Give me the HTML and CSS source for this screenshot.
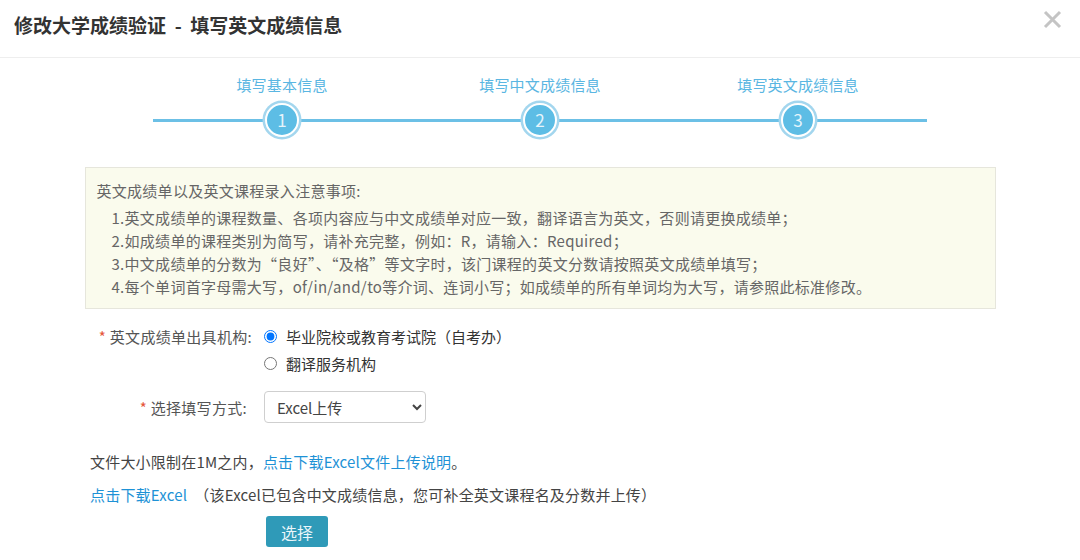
FILE: index.html
```html
<!DOCTYPE html>
<html lang="zh-CN">
<head>
    <meta charset="UTF-8">
    <title>修改大学成绩验证</title>
    <link rel="stylesheet" href="styles.css">
</head>
<body>
    <div class="dialog">
        <div class="dialog-header">
            <h2 class="dialog-title">修改大学成绩验证&nbsp;&nbsp;-&nbsp;&nbsp;填写英文成绩信息</h2>
            <span class="close">
                <svg width="19" height="19" viewBox="0 0 19 19"><path d="M2 2L17 17M17 2L2 17" stroke="#c4c4c4" stroke-width="3"/></svg>
            </span>
        </div>

        <div class="steps">
            <div class="step">
                <div class="step-name">填写基本信息</div>
                <div class="step-num">1</div>
            </div>
            <div class="step">
                <div class="step-name">填写中文成绩信息</div>
                <div class="step-num">2</div>
            </div>
            <div class="step">
                <div class="step-name">填写英文成绩信息</div>
                <div class="step-num">3</div>
            </div>
        </div>

        <div class="notice">
            <p class="notice-title">英文成绩单以及英文课程录入注意事项:</p>
            <p class="notice-item">1.英文成绩单的课程数量、各项内容应与中文成绩单对应一致，翻译语言为英文，否则请更换成绩单；</p>
            <p class="notice-item">2.如成绩单的课程类别为简写，请补充完整，例如：R，请输入：Required；</p>
            <p class="notice-item">3.中文成绩单的分数为“良好”、“及格”等文字时，该门课程的英文分数请按照英文成绩单填写；</p>
            <p class="notice-item">4.每个单词首字母需大写，of/in/and/to等介词、连词小写；如成绩单的所有单词均为大写，请参照此标准修改。</p>
        </div>

        <form class="form">
            <div class="form-row">
                <label class="form-label"><span class="req">*</span> 英文成绩单出具机构:</label>
                <div class="radio-group">
                    <label class="radio"><input type="radio" name="org" checked> 毕业院校或教育考试院（自考办）</label>
                    <label class="radio"><input type="radio" name="org"> 翻译服务机构</label>
                </div>
            </div>
            <div class="form-row row-select">
                <label class="form-label label-short"><span class="req">*</span> 选择填写方式:</label>
                <select class="select">
                    <option>Excel上传</option>
                    <option>手动填写</option>
                </select>
            </div>
        </form>

        <p class="tip">文件大小限制在1M之内，<a href="#">点击下载Excel文件上传说明</a>。</p>
        <p class="download"><a href="#">点击下载Excel</a> &nbsp;（该Excel已包含中文成绩信息，您可补全英文课程名及分数并上传）</p>
        <div class="actions">
            <button type="button" class="btn">选择</button>
        </div>
    </div>
</body>
</html>
```

FILE: styles.css
```css
body {
    margin: 0;
    background: #fff;
    font-family: "Noto Sans CJK SC", "Noto Sans", sans-serif;
    color: #333;
}
p {
    margin: 0;
}
a {
    color: #1e92d6;
    text-decoration: none;
}

.dialog-header {
    height: 57px;
    border-bottom: 1px solid #eeeeee;
    display: flex;
    justify-content: space-between;
    padding: 0 18px 0 14px;
}
.dialog-title {
    margin: 0;
    padding-top: 13px;
    font-size: 19px;
    line-height: 24px;
    font-weight: bold;
    color: #333;
}
.close {
    margin-top: 10px;
    height: 19px;
    cursor: pointer;
}

.steps {
    position: relative;
    width: 774px;
    margin: 17px auto 0;
    display: grid;
    grid-template-columns: repeat(3, 1fr);
}
.steps::before {
    content: "";
    position: absolute;
    left: 0;
    right: 0;
    top: 44px;
    height: 3px;
    background: #6cc0e6;
}
.step {
    position: relative;
    display: flex;
    flex-direction: column;
    align-items: center;
}
.step-name {
    font-size: 15px;
    line-height: 20px;
    color: #5ab6e2;
    letter-spacing: 0.2px;
}
.step-num {
    margin-top: 8px;
    width: 30px;
    height: 30px;
    border-radius: 50%;
    border: 2px solid #fff;
    box-shadow: 0 0 0 2.5px #a3d6ee;
    background: #5dbde5;
    color: #e6f4fb;
    font-size: 17px;
    line-height: 30px;
    text-align: center;
}

.notice {
    width: 887px;
    margin: 30px auto 0;
    padding: 11px 11px 10px;
    border: 1px solid #e6e6dc;
    background: #fafbed;
    color: #666;
    font-size: 15px;
    line-height: 23px;
    letter-spacing: 0.28px;
}
.notice-title {
    margin-bottom: 4px;
}
.notice-item {
    padding-left: 15px;
}

.form {
    margin-top: 14px;
}
.form-row {
    display: flex;
    gap: 12px;
}
.form-label {
    width: 252px;
    flex-shrink: 0;
    text-align: right;
    font-size: 15px;
    line-height: 27px;
    color: #555;
    letter-spacing: 0.3px;
}
.label-short {
    width: 247px;
    padding-right: 5px;
}
.req {
    color: #e5553a;
}
.radio-group {
    display: flex;
    flex-direction: column;
}
.radio {
    display: flex;
    align-items: center;
    gap: 9px;
    height: 27px;
    font-size: 15px;
    color: #333;
}
.radio input {
    margin: 0;
    width: 13px;
    height: 13px;
}
.row-select {
    margin-top: 14px;
    align-items: center;
}
.select {
    width: 162px;
    height: 32px;
    padding-left: 8px;
    border: 1px solid #cfcfcf;
    border-radius: 4px;
    background: #fff;
    font-family: inherit;
    font-size: 15px;
    color: #444;
}

.tip,
.download {
    padding-left: 90px;
    font-size: 15px;
    line-height: 23px;
    color: #444;
    letter-spacing: 0.2px;
}
.tip {
    margin-top: 27px;
}
.download {
    margin-top: 10px;
}
.actions {
    margin-top: 10px;
    padding-left: 266px;
}
.btn {
    width: 62px;
    height: 31px;
    border: none;
    border-radius: 3px;
    background: #2f9ab8;
    color: #eaf6fa;
    font-family: inherit;
    font-size: 16px;
    cursor: pointer;
}
```
